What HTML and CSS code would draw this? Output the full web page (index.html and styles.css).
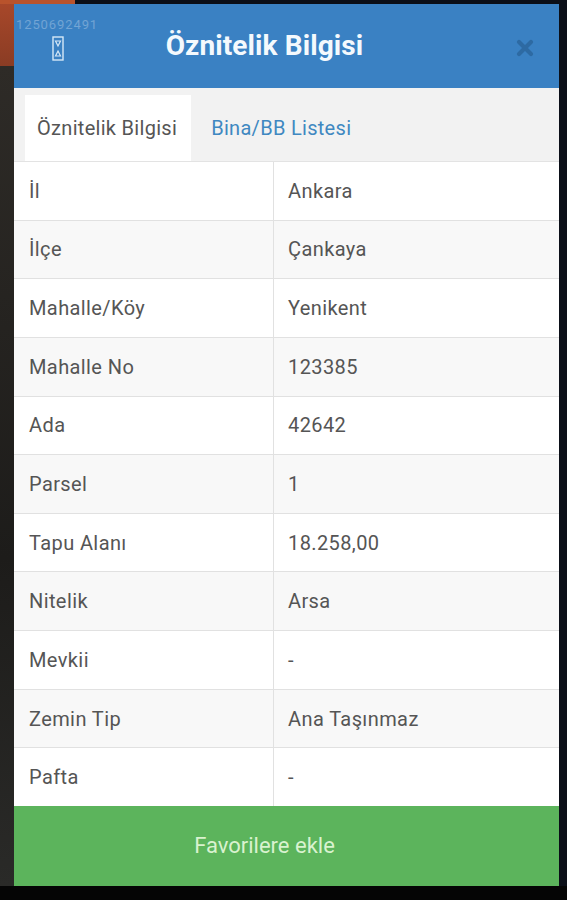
FILE: index.html
```html
<!DOCTYPE html>
<html lang="tr">
<head>
<meta charset="utf-8">
<title>Öznitelik Bilgisi</title>
<link rel="stylesheet" href="styles.css">
</head>
<body>
<div class="page">
  <div class="modal">
    <header class="modal-header">
      <span class="watermark">1250692491</span>
      <svg class="glyph" width="12" height="25" viewBox="0 0 12 25" aria-hidden="true">
        <rect x="1" y="1" width="10" height="23" fill="none" stroke="#d6e8f7" stroke-width="1.4"/>
        <path d="M3.5 5 L8.5 5 L6 10 Z M6 15 L8.5 20 L3.5 20 Z" fill="none" stroke="#d6e8f7" stroke-width="1.2"/>
      </svg>
      <h1 class="title">Öznitelik Bilgisi</h1>
      <svg class="close" width="18" height="18" viewBox="0 0 18 18" aria-hidden="true">
        <path d="M3 3 L15 15 M15 3 L3 15" stroke="#2d6aa3" stroke-width="4.2" stroke-linecap="round"/>
      </svg>
    </header>
    <nav class="tabs">
      <div class="tab active">Öznitelik Bilgisi</div>
      <div class="tab">Bina/BB Listesi</div>
    </nav>
    <div class="table">
      <div class="row"><div class="cell key">İl</div><div class="cell val">Ankara</div></div>
      <div class="row"><div class="cell key">İlçe</div><div class="cell val">Çankaya</div></div>
      <div class="row"><div class="cell key">Mahalle/Köy</div><div class="cell val">Yenikent</div></div>
      <div class="row"><div class="cell key">Mahalle No</div><div class="cell val">123385</div></div>
      <div class="row"><div class="cell key">Ada</div><div class="cell val">42642</div></div>
      <div class="row"><div class="cell key">Parsel</div><div class="cell val">1</div></div>
      <div class="row"><div class="cell key">Tapu Alanı</div><div class="cell val">18.258,00</div></div>
      <div class="row"><div class="cell key">Nitelik</div><div class="cell val">Arsa</div></div>
      <div class="row"><div class="cell key">Mevkii</div><div class="cell val">-</div></div>
      <div class="row"><div class="cell key">Zemin Tip</div><div class="cell val">Ana Taşınmaz</div></div>
      <div class="row"><div class="cell key">Pafta</div><div class="cell val">-</div></div>
    </div>
    <button class="fav">Favorilere ekle</button>
  </div>
</div>
</body>
</html>
```
FILE: styles.css
```css
html, body {
  margin: 0;
  padding: 0;
}
body {
  width: 567px;
  height: 900px;
  overflow: hidden;
  font-family: Roboto, "Noto Sans", "Liberation Sans", sans-serif;
  background:
    linear-gradient(#050505, #050505) 0 886px / 567px 14px no-repeat,
    linear-gradient(#b9532c, #b9532c) 0 0 / 75px 4px no-repeat,
    linear-gradient(#a9482a, #8a3c24) 0 0 / 14px 66px no-repeat,
    linear-gradient(#2e2b27, #1d1c1a 60%, #2a2a28) 0 66px / 14px 820px no-repeat,
    #0b0f18;
}
.page {
  padding: 4px 8px 0 14px;
}
.modal {
  width: 545px;
  height: 882px;
  display: flex;
  flex-direction: column;
  background: #f2f2f2;
}
.modal-header {
  position: relative;
  height: 84px;
  flex: none;
  background: #3a81c3;
  display: flex;
  align-items: center;
  justify-content: center;
  padding-right: 44px;
  box-sizing: border-box;
}
.watermark {
  position: absolute;
  left: 2px;
  top: 13px;
  font-size: 13px;
  letter-spacing: 0.9px;
  color: rgba(225, 236, 248, 0.34);
}
.glyph {
  position: absolute;
  left: 38px;
  top: 32px;
}
.close {
  position: absolute;
  left: 502px;
  top: 35px;
}
.title {
  margin: 0 0 2px 0;
  font-size: 28px;
  font-weight: 700;
  color: #f4f9fd;
  letter-spacing: 0.1px;
}
.tabs {
  height: 73px;
  flex: none;
  display: flex;
  align-items: flex-end;
  padding-left: 11px;
  background: #f2f2f2;
}
.tab {
  height: 66px;
  display: flex;
  align-items: center;
  padding: 0 17px 0 20px;
  font-size: 20px;
  letter-spacing: 0.3px;
  color: #3f88c1;
}
.tab.active {
  background: #ffffff;
  color: #555555;
  padding: 0 14px 0 12px;
}
.table {
  height: 644px;
  flex: none;
  display: flex;
  flex-direction: column;
  background: #ffffff;
  border-top: 1px solid #e3e3e3;
}
.row {
  flex: 1;
  display: flex;
  border-bottom: 1px solid #e1e1e1;
  background: #ffffff;
}
.row:nth-child(even) {
  background: #f8f8f8;
}
.row:last-child {
  border-bottom: none;
}
.cell {
  display: flex;
  align-items: center;
  font-size: 20px;
  letter-spacing: 0.4px;
  color: #555555;
}
.key {
  width: 244px;
  padding-left: 15px;
  border-right: 1px solid #e1e1e1;
}
.val {
  flex: 1;
  padding-left: 14px;
}
.fav {
  flex: 1;
  border: none;
  margin: 0;
  background: #5cb45c;
  color: #d9f2cf;
  font-family: Roboto, "Noto Sans", "Liberation Sans", sans-serif;
  font-size: 22px;
  padding: 0 44px 2px 0;
}
```
